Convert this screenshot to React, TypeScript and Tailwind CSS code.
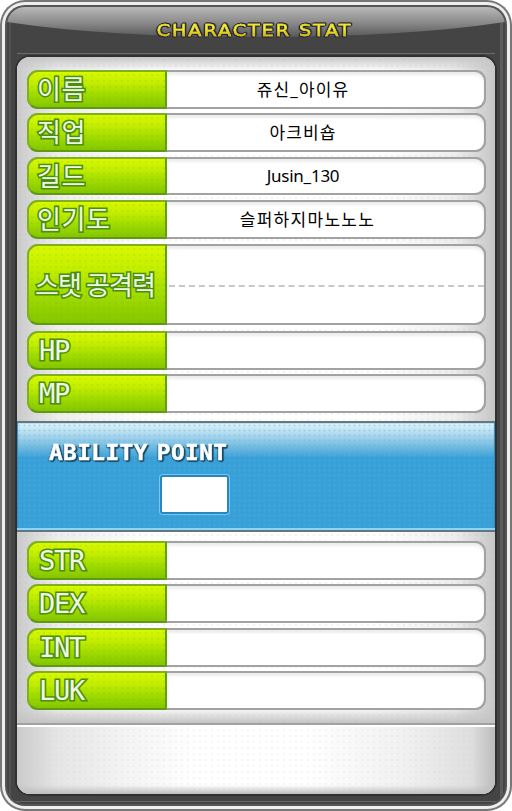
import React from "react";

type RowProps = {
  label: string;
  value?: string;
  valueClass?: string;
  className: string;
  labelClass: string;
  split?: boolean;
};

const outline =
  "[-webkit-text-stroke:3.2px_#4b8f10] [paint-order:stroke_fill] text-[#eff8e4]";

function Row({ label, value, valueClass = "", className, labelClass, split }: RowProps) {
  return (
    <div className={`flex w-[459px] shrink-0 rounded-[11px] bg-[#a2a2a2] ${className}`}>
      <div className="flex w-[140px] shrink-0 items-center rounded-l-[11px] border-2 border-[#80b01c] border-r-[#649f18] border-b-[#609a12] bg-[radial-gradient(#6fa80024_0.8px,transparent_1px),linear-gradient(#d8f800,#c4ee00_30%,#a2dc00_62%,#84c600)] bg-[length:6px_6px,100%_100%]">
        <span className={`whitespace-nowrap ${outline} ${labelClass}`}>{label}</span>
      </div>
      <div className="flex flex-1 items-center rounded-r-[11px] border-y-2 border-r-2 border-[#a2a2a2] bg-white shadow-[inset_0_3px_3px_#ededed]">
        {split ? (
          <div className="mt-[3px] ml-[2px] h-0 w-full border-t-2 border-dashed border-[#c8c8c8]" />
        ) : (
          <span className={`w-[272px] text-center font-['Noto_Sans','Noto_Sans_CJK_KR',sans-serif] text-[17px] leading-6 font-normal text-black ${valueClass}`}>
            {value}
          </span>
        )}
      </div>
    </div>
  );
}

const ko = "ml-[8px] font-['Noto_Sans_CJK_KR',sans-serif] text-[26px] leading-[30px] font-normal tracking-[0.6px] pb-[3px]";
const en = "ml-[10px] font-['DejaVu_Sans_Mono',monospace] text-[27px] leading-[30px] font-normal tracking-[-1.3px]";

export default function App() {
  return (
    <div className="h-[811px] w-[512px] overflow-hidden bg-white">
      <div className="h-full rounded-[25px] bg-[#777] p-[2px]">
        <div className="h-full rounded-[23px] bg-[#eee] p-[3px]">
          <div className="h-full rounded-[20px] bg-[#555] p-[2px]">
            <div className="relative h-full overflow-hidden rounded-[18px] bg-[#444] px-[10px]">
              <div className="absolute inset-y-0 left-[2px] w-[2px] bg-[#525252]" />
              <div className="absolute inset-y-0 right-[2px] w-[3px] bg-[#5c5c5c]" />
              <div className="absolute inset-x-0 bottom-[2px] h-px bg-[#666]" />
              <svg className="absolute top-0 left-0" width="498" height="50" viewBox="0 0 498 50">
                <defs>
                  <linearGradient id="gloss" x1="0" y1="0" x2="0" y2="1">
                    <stop offset="0" stopColor="#b8b8b8" />
                    <stop offset="0.5" stopColor="#8c8c8c" />
                    <stop offset="1" stopColor="#585858" />
                  </linearGradient>
                </defs>
                <path d="M0 0H498V15Q400 30 249 30T0 15Z" fill="url(#gloss)" />
                <path d="M10 46.5H488" stroke="#6c6c6c" />
              </svg>
              <header className="relative flex h-[50px] items-center justify-center pr-[3px] pb-[3px]">
                <h1 className="scale-x-[1.2] bg-linear-to-b from-[#f4ec3c] from-40% to-[#d2b000] to-75% bg-clip-text font-['DejaVu_Sans',sans-serif] text-[16px] leading-[20px] font-normal tracking-[1.6px] whitespace-nowrap text-transparent [-webkit-text-stroke:0.4px_#e6d620] [filter:drop-shadow(1px_0_0_#29293b)_drop-shadow(-1px_1px_0_#29293b)_drop-shadow(0_-1px_0_#29293b)]">
                  CHARACTER STAT
                </h1>
              </header>
              <main className="relative flex h-[737px] w-[478px] flex-col overflow-hidden rounded-[13px] bg-[#f3f3f3] shadow-[0_0_0_2px_#303030]">
                <section className="flex h-[364px] shrink-0 flex-col bg-[radial-gradient(#bcbcbc30_0.8px,transparent_1px),linear-gradient(#c7c7c7,transparent_14px),linear-gradient(90deg,#cacaca,#ededed_40px,#fff_140px,#fff_360px,#ededed_438px,#c6c6c6)] bg-[length:6px_6px,100%_100%,100%_100%] pt-[13px] pl-[10px]">
                  <Row label="이름" value="쥬신_아이유" valueClass="tracking-[1.1px]" className="h-[39px]" labelClass={ko} />
                  <Row label="직업" value="아크비숍" valueClass="tracking-[1.1px]" className="mt-[4px] h-[39px]" labelClass={ko} />
                  <Row label="길드" value="Jusin_130" valueClass="tracking-[-0.25px]" className="mt-[5px] h-[38px]" labelClass={ko} />
                  <Row label="인기도" value="슬퍼하지마노노노" valueClass="tracking-[1.3px] pl-[9px]" className="mt-[5px] h-[39px]" labelClass={ko} />
                  <Row
                    label="스탯 공격력"
                    split
                    className="mt-[5px] h-[81px]"
                    labelClass="ml-[6px] font-['Noto_Sans_CJK_KR',sans-serif] text-[26px] leading-[30px] font-normal tracking-[-0.9px] pb-px"
                  />
                  <Row label="HP" className="mt-[6px] h-[39px]" labelClass={en} />
                  <Row label="MP" className="mt-[4px] h-[39px]" labelClass={en} />
                </section>
                <section className="h-[111px] shrink-0 border-y-2 border-[#62777f] bg-[radial-gradient(#58b7e940_1px,transparent_1.3px),linear-gradient(#dff4f8,#acd7ed_12px,#72bade_24px,#389fd7_35px,#389fd7)] bg-[length:5px_5px,100%_100%] shadow-[inset_0_-2px_0_#8dd4f5,inset_1px_0_1px_#328abf,inset_-1px_0_1px_#328abf]">
                  <h2 className="mt-[17px] ml-[32px] h-[25px] w-max origin-left scale-x-[1.035] font-['DejaVu_Sans_Mono',monospace] text-[22px] leading-[25px] font-bold tracking-[0.4px] [word-spacing:-5px] whitespace-nowrap text-white [-webkit-text-stroke:0.5px_white] [text-shadow:2px_1px_1px_#174c6b,-1px_1px_1px_#285d7b,1px_2px_1px_#174c6b]">
                    ABILITY POINT
                  </h2>
                  <div className="mt-[10px] ml-[143px] h-[39px] w-[69px] rounded-[3px] border-2 border-[#2787c1] bg-white shadow-[0_0_0_1px_#75c7ed]" />
                </section>
                <section className="flex h-[193px] shrink-0 flex-col border-b-2 border-[#a1a1a1] bg-[radial-gradient(#bcbcbc30_0.8px,transparent_1px),linear-gradient(transparent_175px,#c4c4c4),linear-gradient(90deg,#cacaca,#ededed_40px,#fff_140px,#fff_360px,#ededed_438px,#c6c6c6)] bg-[length:6px_6px,100%_100%,100%_100%] pt-[9px] pl-[10px]">
                  <Row label="STR" className="h-[39px]" labelClass={en} />
                  <Row label="DEX" className="mt-[4px] h-[39px]" labelClass={en} />
                  <Row label="INT" className="mt-[5px] h-[39px]" labelClass={en} />
                  <Row label="LUK" className="mt-[4px] h-[39px]" labelClass={en} />
                </section>
                <footer className="flex-1 border-t-2 border-white bg-[radial-gradient(#cccccc30_0.8px,transparent_1px),linear-gradient(transparent_58px,#bdbdbd),linear-gradient(90deg,#cacaca,#e5e5e5_40px,#f4f4f4_110px,#fff_180px,#fff_290px,#f0f0f0_390px,#dedede_455px,#bbb)] bg-[length:6px_6px,100%_100%,100%_100%]" />
              </main>
            </div>
          </div>
        </div>
      </div>
    </div>
  );
}
